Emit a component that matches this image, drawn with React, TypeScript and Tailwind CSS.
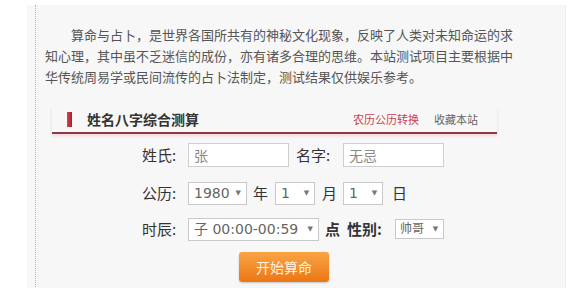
const cjk = "font-['Noto_Sans_CJK_SC',sans-serif]";
const mono = "font-['DejaVu_Sans','Noto_Sans_CJK_SC',sans-serif]";

function FakeSelect({ value, className }: { value: string; className: string }) {
  return (
    <div
      className={`flex items-center justify-between bg-white border border-[#c9c9c9] pl-[5px] pr-[5px] text-[14px] text-[#666] ${mono} ${className}`}
    >
      <span className="leading-none whitespace-nowrap">{value}</span>
      <span className="text-[7px] text-[#777] leading-none">▼</span>
    </div>
  );
}

function TextBox({ value }: { value: string }) {
  return (
    <div
      className={`flex items-center w-[101px] h-[24px] bg-white border border-[#cfcfcf] pl-[5px] text-[14px] text-[#888] ${cjk}`}
    >
      {value}
    </div>
  );
}

export default function App() {
  return (
    <div className={`w-[575px] h-[288px] bg-white overflow-hidden ${cjk}`}>
      <div className="ml-[27px] mt-[5px] w-[539px] h-[300px] bg-[#f7f7f7] border-r border-[#ececec]">
        <div className="ml-[8px] h-full border-l border-dotted border-[#b5b5b5] pl-[9px]">
          {/* intro */}
          <p className="w-[472px] pt-[19px] text-[13px] leading-[21px] text-[#555] indent-[26px]">
            算命与占卜，是世界各国所共有的神秘文化现象，反映了人类对未知命运的求知心理，其中虽不乏迷信的成份，亦有诸多合理的思维。本站测试项目主要根据中华传统周易学或民间流传的占卜法制定，测试结果仅供娱乐参考。
          </p>

          {/* title bar */}
          <div className="ml-[7px] mt-[20px] w-[445px] h-[27px] flex items-center border-b-2 border-[#8a3b48] shadow-[0_2px_3px_rgba(230,120,130,0.25)]">
            <div className="ml-[15px] w-[5px] h-[15px] bg-gradient-to-r from-[#d8424f] to-[#a51f2b]" />
            <div className="ml-[15px] text-[14px] font-semibold text-[#333]">姓名八字综合测算</div>
            <div className="ml-auto text-[11px] text-[#c84350]">农历公历转换</div>
            <div className="ml-[15px] mr-[19px] text-[11px] text-[#666]">收藏本站</div>
          </div>

          {/* form */}
          <div className="pl-[97px] text-[15px] text-[#333]">
            <div className="mt-[9px] h-[24px] flex items-center">
              <span className="w-[46px]">姓氏:</span>
              <TextBox value="张" />
              <span className="ml-[7px] w-[47px]">名字:</span>
              <TextBox value="无忌" />
            </div>

            <div className="mt-[14px] h-[24px] flex items-center">
              <span className="w-[46px]">公历:</span>
              <FakeSelect value="1980" className="w-[59px] h-[23px]" />
              <span className="ml-[6px]">年</span>
              <FakeSelect value="1" className="ml-[7px] w-[40px] h-[23px]" />
              <span className="ml-[7px]">月</span>
              <FakeSelect value="1" className="ml-[6px] w-[40px] h-[23px]" />
              <span className="ml-[9px]">日</span>
            </div>

            <div className="mt-[12px] h-[24px] flex items-center">
              <span className="w-[46px]">时辰:</span>
              <FakeSelect value="子 00:00-00:59" className="w-[131px] h-[23px]" />
              <span className="ml-[6px] font-bold">点</span>
              <span className="ml-[7px] w-[48px] font-bold">性别:</span>
              <FakeSelect value="帅哥" className="w-[49px] h-[20px] !text-[12px] !pl-[4px]" />
            </div>

            <div className="mt-[11px] pl-[97px]">
              <button className="w-[90px] h-[30px] rounded-[3px] bg-gradient-to-b from-[#f9a443] to-[#ec7612] text-[14px] text-[#fff3e0] shadow-[0_1px_2px_rgba(0,0,0,0.2)]">
                开始算命
              </button>
            </div>
          </div>
        </div>
      </div>
    </div>
  );
}
